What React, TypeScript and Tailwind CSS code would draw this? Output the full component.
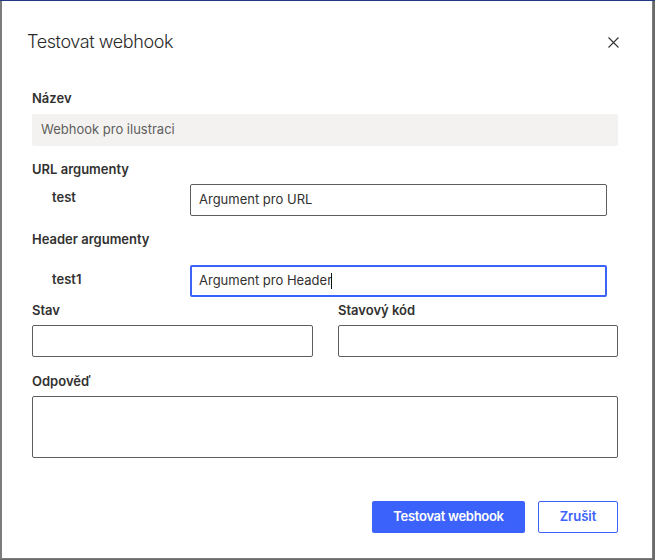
import React from "react";

export default function App() {
  const font = { fontFamily: "Inter, 'Noto Sans', sans-serif" };
  return (
    <div className="w-[655px] h-[560px] bg-[#6a6a6a] overflow-hidden" style={font}>
      <div className="h-px bg-[#1f3a86]" />
      <div className="w-[653px] h-[558px] bg-white border-l-2 border-r border-b border-[#7c7c7c] flex flex-col">
        <div className="flex items-center justify-between pl-[25px] pr-[33px] pt-[29px]">
          <div className="text-[18px] leading-[24px] font-light text-[#2b2b2b] tracking-[-0.4px]">Testovat webhook</div>
          <svg width="11" height="11" viewBox="0 0 11 11" className="text-[#333]">
            <path d="M0.5 0.5 L10.5 10.5 M10.5 0.5 L0.5 10.5" stroke="currentColor" strokeWidth="1.1" />
          </svg>
        </div>

        <div className="px-[30px] flex flex-col text-[13px] text-[#323130]">
          <div className="mt-[35px] h-[18px] leading-[18px] font-semibold">Název</div>
          <div className="mt-[7px] h-[32px] w-[586px] bg-[#f3f2f1] rounded-[2px] flex items-center pl-[9px] text-[#605e5c]">
            Webhook pro ilustraci
          </div>

          <div className="mt-[14px] h-[18px] leading-[18px] font-semibold">URL argumenty</div>
          <div className="mt-[6px] flex items-center">
            <div className="w-[158px] pl-[20px] font-semibold -mt-[4px]">test</div>
            <div className="h-[32px] w-[417px] border border-[#605e5c] rounded-[2px] flex items-center pl-[8px]">
              Argument pro URL
            </div>
          </div>

          <div className="mt-[14px] h-[18px] leading-[18px] font-semibold">Header argumenty</div>
          <div className="mt-[17px] flex items-center">
            <div className="w-[158px] pl-[20px] font-semibold -mt-[3px]">test1</div>
            <div className="h-[32px] w-[417px] border-2 border-[#3b63f7] rounded-[2px] flex items-center pl-[7px]">
              <span>Argument pro Header</span>
              <span className="inline-block w-px h-[16px] bg-[#111] -ml-[1px]" />
            </div>
          </div>

          <div className="mt-[4px] flex gap-[25px]">
            <div className="flex flex-col w-[281px]">
              <div className="h-[18px] leading-[18px] font-semibold">Stav</div>
              <div className="mt-[6px] h-[32px] border border-[#605e5c] rounded-[2px]" />
            </div>
            <div className="flex flex-col w-[280px]">
              <div className="h-[18px] leading-[18px] font-semibold">Stavový kód</div>
              <div className="mt-[6px] h-[32px] border border-[#605e5c] rounded-[2px]" />
            </div>
          </div>

          <div className="mt-[15px] h-[18px] leading-[18px] font-semibold">Odpověď</div>
          <div className="mt-[6px] h-[62px] w-[586px] border border-[#605e5c] rounded-[2px]" />

          <div className="mt-[43px] flex justify-end gap-[13px] w-[586px]">
            <button className="h-[32px] w-[153px] bg-[#3b63fb] rounded-[2px] text-white font-semibold text-[13px] tracking-[-0.3px]">
              Testovat webhook
            </button>
            <button className="h-[32px] w-[80px] border border-[#3b63fb] rounded-[2px] text-[#3b63fb] font-semibold text-[13px] bg-white">
              Zrušit
            </button>
          </div>
        </div>
      </div>
    </div>
  );
}
